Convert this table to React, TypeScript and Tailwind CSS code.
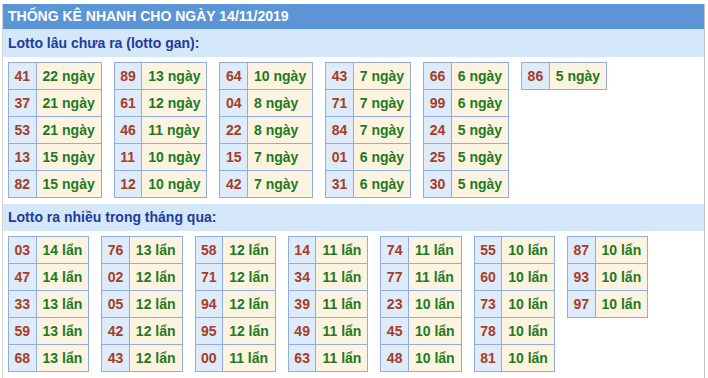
const gan: [string, string][][] = [
  [["41", "22"], ["37", "21"], ["53", "21"], ["13", "15"], ["82", "15"]],
  [["89", "13"], ["61", "12"], ["46", "11"], ["11", "10"], ["12", "10"]],
  [["64", "10"], ["04", "8"], ["22", "8"], ["15", "7"], ["42", "7"]],
  [["43", "7"], ["71", "7"], ["84", "7"], ["01", "6"], ["31", "6"]],
  [["66", "6"], ["99", "6"], ["24", "5"], ["25", "5"], ["30", "5"]],
  [["86", "5"]],
];

const nhieu: [string, string][][] = [
  [["03", "14"], ["47", "14"], ["33", "13"], ["59", "13"], ["68", "13"]],
  [["76", "13"], ["02", "12"], ["05", "12"], ["42", "12"], ["43", "12"]],
  [["58", "12"], ["71", "12"], ["94", "12"], ["95", "12"], ["00", "11"]],
  [["14", "11"], ["34", "11"], ["39", "11"], ["49", "11"], ["63", "11"]],
  [["74", "11"], ["77", "11"], ["23", "10"], ["45", "10"], ["48", "10"]],
  [["55", "10"], ["60", "10"], ["73", "10"], ["78", "10"], ["81", "10"]],
  [["87", "10"], ["93", "10"], ["97", "10"]],
];

const Block = ({ rows, unit }: { rows: [string, string][]; unit: string }) => (
  <table className="border-collapse">
    <tbody>
      {rows.map(([num, count]) => (
        <tr key={num} className="h-[27px]">
          <td className="border border-[#91ade0] bg-[#deebfb] px-[5.5px] text-[#a63d24] leading-none">{num}</td>
          <td className="border border-[#91ade0] bg-[#fdf3e1] px-[6px] text-[#1d7a1d] leading-none">
            {count} {unit}
          </td>
        </tr>
      ))}
    </tbody>
  </table>
);

const SubTitle = ({ children, h }: { children: string; h: string }) => (
  <div className={`${h} bg-[#d5e7fa] px-[5px] text-[14px] font-bold text-[#1e3c9c] flex items-center`}>{children}</div>
);

export default function App() {
  return (
    <div className="w-[708px] h-[378px] bg-white pt-[4px] pl-[2px] font-['Liberation_Sans',Arial,sans-serif] text-[14px] font-bold overflow-hidden">
      <div className="w-[703px] h-[400px] border-l border-l-[#d4d4d4] border-r border-r-[#c4c4c4] flex flex-col">
        <div className="h-[25px] bg-[#5b95d5] text-white px-[5px] flex items-center">THỐNG KÊ NHANH CHO NGÀY 14/11/2019</div>
        <SubTitle h="h-[28px]">Lotto lâu chưa ra (lotto gan):</SubTitle>
        <div className="flex items-start gap-x-[12px] px-[5px] pt-[5px] pb-[6px]">
          {gan.map((rows, i) => (
            <Block key={i} rows={rows} unit="ngày" />
          ))}
        </div>
        <SubTitle h="h-[27px]">Lotto ra nhiều trong tháng qua:</SubTitle>
        <div className="flex items-start gap-x-[12px] px-[5px] pt-[5px]">
          {nhieu.map((rows, i) => (
            <Block key={i} rows={rows} unit="lẩn" />
          ))}
        </div>
      </div>
    </div>
  );
}
